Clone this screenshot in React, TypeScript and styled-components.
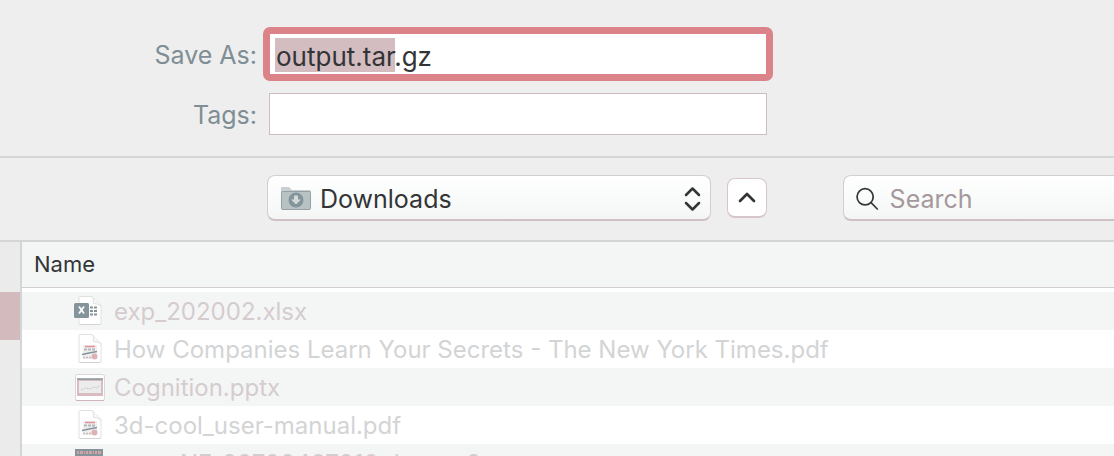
import React from "react";
import styled, { createGlobalStyle, css } from "styled-components";

const Global = createGlobalStyle`
  *, *::before, *::after { box-sizing: border-box; }
  body { margin: 0; background: #eeeeee; overflow: hidden; }
  body, input, button, select, table { font-family: Inter, "Liberation Sans", sans-serif; }
`;

const Dialog = styled.form`
  display: flex;
  flex-direction: column;
  height: 100vh;
  overflow: hidden;
  background: #eeeeee;
  color: #333436;
`;

const Fields = styled.div`
  display: flex;
  flex-direction: column;
  gap: 12px;
  height: 158px;
  flex: none;
  padding-top: 27px;
  border-bottom: 2px solid #d4d5d5;
`;

const FieldRow = styled.div`
  display: grid;
  grid-template-columns: 257px minmax(0, 510px);
  column-gap: 6px;
  align-items: center;
`;

const Label = styled.label`
  padding-top: 2px;
  text-align: right;
  font-size: 25px;
  line-height: 32px;
  color: #7f8e95;
`;

const FocusRing = styled.div`
  border: 7px solid #dc8389;
  border-radius: 7px;
  background: #dc8389;
`;

const inputText = css`
  display: block;
  width: 100%;
  outline: none;
  font-size: 25px;
  color: #333436;
`;

const NameInput = styled.input`
  ${inputText}
  height: 40px;
  padding: 5px 6px 0;
  border: 0;
  background: linear-gradient(#d4bdc0, #d4bdc0) 5px 4px / 120px 34px no-repeat #ffffff;
  font-size: 26px;
`;

const TagsInput = styled.input`
  ${inputText}
  width: calc(100% - 12px);
  height: 42px;
  margin-left: 6px;
  padding: 0 6px;
  border: 1px solid #cdbcbe;
  border-radius: 0;
  background: #ffffff;
`;

const Toolbar = styled.div`
  display: flex;
  align-items: center;
  flex: none;
  height: 82px;
  padding: 0 0 2px 267px;
`;

const surface = css`
  border: 1px solid #d3cfd0;
  border-bottom: 2px solid #cfc0c3;
  background: linear-gradient(#ffffff, #f4f6f6);
`;

const FolderPicker = styled.div`
  ${surface}
  display: flex;
  align-items: center;
  flex: 0 1 444px;
  height: 46px;
  padding: 2px 8px 0 12px;
  border-radius: 8px;
  gap: 8px;
`;

const FolderSelect = styled.select`
  appearance: none;
  flex: 1;
  min-width: 0;
  height: 40px;
  padding: 0;
  border: 0;
  outline: none;
  background: transparent;
  font-size: 25px;
  color: #333436;
`;

const CollapseButton = styled.button`
  display: grid;
  place-items: center;
  flex: none;
  width: 40px;
  height: 40px;
  margin-left: 16px;
  padding: 0;
  border: 1px solid #d6c6c9;
  border-bottom-width: 2px;
  border-radius: 8px;
  background: #ffffff;
`;

const SearchBox = styled.label`
  ${surface}
  display: flex;
  align-items: center;
  gap: 11px;
  flex: 1;
  min-width: 0;
  height: 46px;
  margin-left: 76px;
  padding: 2px 0 0 12px;
  border-right: 0;
  border-radius: 8px 0 0 8px;
`;

const SearchInput = styled.input`
  ${inputText}
  min-width: 0;
  padding: 0;
  border: 0;
  background: transparent;
  &::placeholder { color: #a5999c; opacity: 1; }
`;

const Browser = styled.div`
  display: grid;
  grid-template-columns: 22px minmax(0, 1fr);
  flex: 1;
  min-height: 0;
  border-top: 2px solid #d4d5d5;
`;

const Sidebar = styled.aside`
  padding-top: 50px;
  border-right: 2px solid #d4d5d5;
  background: #ebebeb;
`;

const SidebarSelection = styled.div`
  height: 48px;
  background: #d2babd;
`;

const Files = styled.div`
  overflow: hidden;
  background: #ffffff;
`;

const FileTable = styled.table`
  width: 100%;
  border-collapse: separate;
  border-spacing: 0;
  text-align: left;
  thead::after { content: ""; display: block; height: 4px; }
`;

const HeadCell = styled.th`
  height: 46px;
  padding: 0 12px 2px;
  border-bottom: 1px solid #d3cfd0;
  background: #f4f6f6;
  font-size: 22px;
  font-weight: 400;
  line-height: 28px;
`;

const FileRow = styled.tr`
  color: #d3d4d5;
  &:nth-child(odd) { background: #f4f6f6; color: #d5ccce; }
`;

const FileCell = styled.td`
  height: 38px;
  padding: 0;
`;

const FileEntry = styled.div`
  display: flex;
  align-items: center;
  gap: 8px;
  height: 38px;
  padding-left: 52px;
  svg { flex: none; }
`;

const FileName = styled.span`
  padding-top: 2px;
  font-size: 24px;
  line-height: 30px;
  white-space: nowrap;
`;

const Folder = () => (
  <svg width="32" height="26" viewBox="0 0 32 26" aria-hidden="true">
    <path d="M1 6V2q0-1 1-1h7l3 3h17q2 0 2 1v1z" fill="#c9cfd1" />
    <rect x="1.500" y="5.500" width="29" height="18" rx="1" fill="#b8c1c4" stroke="#94a0a5" />
    <circle cx="16" cy="14" r="7.500" fill="#83949a" />
    <path d="M14 9.500h4v4h3l-5 5-5-5h3z" fill="#d3d9da" />
  </svg>
);

const UpDown = () => (
  <svg width="18" height="26" viewBox="0 0 18 26" fill="none" stroke="#333436" strokeWidth="2.500" strokeLinecap="round" strokeLinejoin="round" aria-hidden="true">
    <path d="M2 9 8.500 2.500 15 9M2 17 8.500 23.500 15 17" />
  </svg>
);

const Up = () => (
  <svg width="18" height="12" viewBox="0 0 18 12" fill="none" stroke="#333436" strokeWidth="2.700" strokeLinecap="round" strokeLinejoin="round" aria-hidden="true">
    <path d="M2 9 9 2 16 9" />
  </svg>
);

const Magnifier = () => (
  <svg width="26" height="26" viewBox="0 0 26 26" fill="none" stroke="#36383a" strokeWidth="2" strokeLinecap="round" aria-hidden="true">
    <circle cx="10.500" cy="10.500" r="9.300" />
    <path d="M17.300 17.300 24.500 24.500" />
  </svg>
);

const Page = () => (
  <>
    <path d="M5 2.500q0-1 1-1h12l9 9v18q0 1-1 1H6q-1 0-1-1z" fill="#fff" stroke="#e0e0e0" />
    <path d="M18 1.500q2 2 1.500 7 5 0 7.500 2.500" fill="#f7f7f7" stroke="#e0e0e0" />
    <path d="M5.500 29.500h21" stroke="#d3d3d3" />
  </>
);

const Sheet = () => (
  <svg width="32" height="32" viewBox="0 0 32 32" aria-hidden="true">
    <Page />
    <rect x="0" y="8" width="15" height="15" rx="1.500" fill="#84949a" />
    <path d="m5 11.500 5 7M10 11.500l-5 7" stroke="#fff" strokeWidth="1.800" />
    <path d="M16 12.500h3M20 12.500h3M16 16h3M20 16h3M16 19.500h3M20 19.500h3" stroke="#84949a" strokeWidth="2" />
  </svg>
);

const Pdf = () => (
  <svg width="32" height="32" viewBox="0 0 32 32" aria-hidden="true">
    <Page />
    <rect x="9" y="12" width="14" height="14" fill="#f1eeee" />
    <path d="M11 13.500h10" stroke="#dc9297" strokeWidth="1.500" />
    <path d="M10 16.500h11" stroke="#b4b8ba" strokeWidth="2" strokeDasharray="3 1" />
    <path d="m8 21.500 7-1.500 8-1.500" stroke="#84949a" strokeWidth="1.600" fill="none" />
    <path d="M9 24.500h9" stroke="#c5b9bb" strokeWidth="1.500" strokeDasharray="2 1" />
    <circle cx="20.500" cy="23.500" r="3" fill="#dcb2b6" />
  </svg>
);

const Slides = () => (
  <svg width="32" height="32" viewBox="0 0 32 32" aria-hidden="true">
    <rect x="1.500" y="3.500" width="29" height="26" rx="2" fill="#fff" stroke="#ddd5d6" />
    <path d="M2 29.500h28" stroke="#cdb6ba" />
    <rect x="3" y="8" width="26" height="17" fill="#d8bcc0" />
    <rect x="5" y="10" width="22" height="12" fill="#ececec" />
    <path d="M3 8h26" stroke="#84949a" strokeWidth="1.500" />
    <path d="m7 19 5-2 4 1 4-2 3 1 3-3" stroke="#c3c5c7" strokeDasharray="2 1" fill="none" />
  </svg>
);

const Thumbnail = () => (
  <svg width="32" height="32" viewBox="0 0 32 32" aria-hidden="true">
    <rect x="1" y="2" width="28" height="28" fill="#84949a" />
    <path d="M3 5.500h24" stroke="#d3a3a8" strokeWidth="3" strokeDasharray="2 1 3 1 1 1" />
    <path d="M3 13h24M3 20h24" stroke="#b9c1c4" />
  </svg>
);

const files = [
  { name: "exp_202002.xlsx", Icon: Sheet },
  { name: "How Companies Learn Your Secrets - The New York Times.pdf", Icon: Pdf },
  { name: "Cognition.pptx", Icon: Slides },
  { name: "3d-cool_user-manual.pdf", Icon: Pdf },
  { name: "exan_NF_20700407010.dot-os 2", Icon: Thumbnail },
];

export default function App() {
  return (
    <>
      <Global />
      <Dialog onSubmit={(e: React.FormEvent) => e.preventDefault()}>
        <Fields>
          <FieldRow>
            <Label htmlFor="name">Save As:</Label>
            <FocusRing>
              <NameInput id="name" defaultValue="output.tar.gz" spellCheck={false} />
            </FocusRing>
          </FieldRow>
          <FieldRow>
            <Label htmlFor="tags">Tags:</Label>
            <TagsInput id="tags" />
          </FieldRow>
        </Fields>
        <Toolbar>
          <FolderPicker>
            <Folder />
            <FolderSelect aria-label="Folder" defaultValue="Downloads">
              <option>Downloads</option>
            </FolderSelect>
            <UpDown />
          </FolderPicker>
          <CollapseButton type="button" aria-label="Collapse">
            <Up />
          </CollapseButton>
          <SearchBox>
            <Magnifier />
            <SearchInput type="search" placeholder="Search" aria-label="Search" />
          </SearchBox>
        </Toolbar>
        <Browser>
          <Sidebar>
            <SidebarSelection />
          </Sidebar>
          <Files>
            <FileTable>
              <thead>
                <tr>
                  <HeadCell scope="col">Name</HeadCell>
                </tr>
              </thead>
              <tbody>
                {files.map(({ name, Icon }) => (
                  <FileRow key={name}>
                    <FileCell>
                      <FileEntry>
                        <Icon />
                        <FileName>{name}</FileName>
                      </FileEntry>
                    </FileCell>
                  </FileRow>
                ))}
              </tbody>
            </FileTable>
          </Files>
        </Browser>
      </Dialog>
    </>
  );
}
